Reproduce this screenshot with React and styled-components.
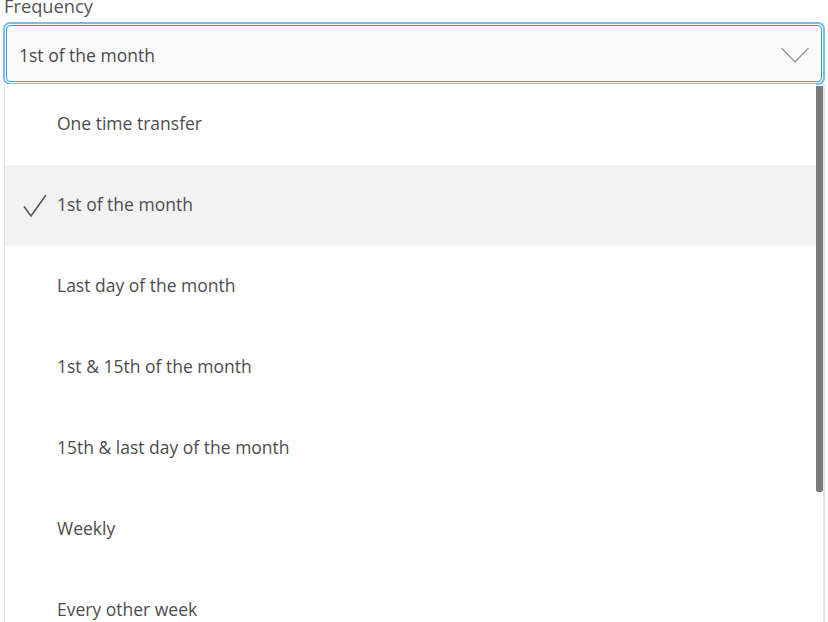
import React from "react";
import styled, { createGlobalStyle } from "styled-components";

const Global = createGlobalStyle`
  html, body { margin: 0; padding: 0; background: #fff; overflow: hidden; }
  body { font-family: "Open Sans", "Noto Sans", sans-serif; }
`;

const Page = styled.div`
  width: 828px;
  height: 622px;
  overflow: hidden;
  padding: 0 3px;
  box-sizing: border-box;
`;

const Label = styled.div`
  margin-top: -5px;
  height: 25px;
  font-size: 18.3px;
  line-height: 22px;
  color: #555;
  padding-left: 1px;
`;

const SelectBox = styled.div`
  margin: 5px 3px 0 3px;
  border: 1px solid #3b98d9;
  border-radius: 4px;
  background: #fafafa;
  box-shadow: 0 0 0 1px #fff, 0 0 0 3px #73bdf2;
  display: flex;
  align-items: center;
  justify-content: space-between;
  padding: 3px 11px 0 12px;
  box-sizing: border-box;
  height: 57px;
  font-size: 17.5px;
  color: #4a4a4a;
`;

const List = styled.div`
  margin: 2px 0 0 1px;
  display: flex;
  border-left: 1px solid #e2e2e2;
  border-right: 2px solid #e6e6e6;
  height: 560px;
  overflow: hidden;
`;

const Rows = styled.div`
  flex: 1;
  display: flex;
  flex-direction: column;
`;

const Row = styled.div`
  flex: 0 0 81px;
  box-sizing: border-box;
  display: flex;
  align-items: center;
  padding: 0 0 3px 52px;
  position: relative;
  font-size: 17.5px;
  color: #4d4d4d;
  background: ${(p) => (p.$selected ? "#f2f2f2" : "#fff")};
`;

const Check = styled.svg`
  position: absolute;
  left: 17px;
  top: 28px;
`;

const Track = styled.div`
  flex: 0 0 7px;
  display: flex;
  flex-direction: column;
`;

const Thumb = styled.div`
  margin-top: 2px;
  height: 406px;
  background: #7a7a7a;
  border-radius: 0 0 2px 2px;
`;

const items = [
  "One time transfer",
  "1st of the month",
  "Last day of the month",
  "1st & 15th of the month",
  "15th & last day of the month",
  "Weekly",
  "Every other week",
];

export default function App() {
  return (
    <Page>
      <Global />
      <Label>Frequency</Label>
      <SelectBox>
        <span>1st of the month</span>
        <svg width="30" height="18" viewBox="0 0 30 18">
          <path d="M1.5 2 L15 16 L28.5 2" fill="none" stroke="#9a9a9a" strokeWidth="1.4" />
        </svg>
      </SelectBox>
      <List>
        <Rows>
          {items.map((t, i) => (
            <Row key={t} $selected={i === 1}>
              {i === 1 && (
                <Check width="26" height="26" viewBox="0 0 26 26">
                  <path d="M2 13.5 L9 23 L24 2" fill="none" stroke="#555" strokeWidth="1.6" />
                </Check>
              )}
              {t}
            </Row>
          ))}
        </Rows>
        <Track>
          <Thumb />
        </Track>
      </List>
    </Page>
  );
}
